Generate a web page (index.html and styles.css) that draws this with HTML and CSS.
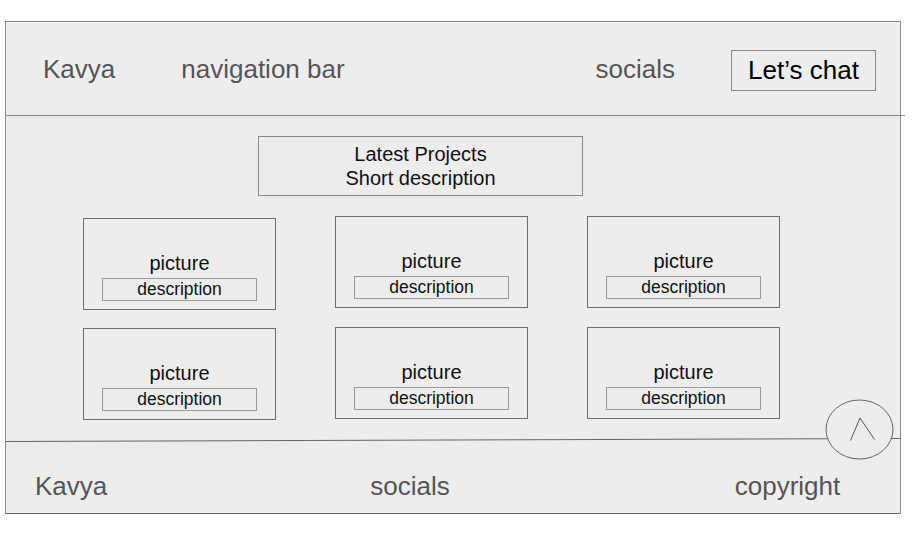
FILE: index.html
```html
<!DOCTYPE html>
<html lang="en">
<head>
<meta charset="utf-8">
<title>Kavya – wireframe</title>
<link rel="stylesheet" href="styles.css">
</head>
<body>
<div class="frame">
  <header class="header">
    <span class="label brand">Kavya</span>
    <span class="label nav">navigation bar</span>
    <span class="label socials">socials</span>
    <button class="chat-btn" type="button">Let’s chat</button>
  </header>
  <div class="header-rule"></div>

  <main class="main">
    <section class="intro">
      <div>Latest Projects</div>
      <div>Short description</div>
    </section>
    <div class="grid">
      <div class="card card--low"><div class="pic">picture</div><div class="desc">description</div></div>
      <div class="card"><div class="pic">picture</div><div class="desc">description</div></div>
      <div class="card"><div class="pic">picture</div><div class="desc">description</div></div>
      <div class="card card--low1"><div class="pic">picture</div><div class="desc">description</div></div>
      <div class="card"><div class="pic">picture</div><div class="desc">description</div></div>
      <div class="card"><div class="pic">picture</div><div class="desc">description</div></div>
    </div>
  </main>

  <svg class="footer-rule" viewBox="0 0 894 4" preserveAspectRatio="none" aria-hidden="true">
    <line x1="0" y1="3.5" x2="894" y2="0.5" stroke="#666" stroke-width="1"/>
  </svg>

  <footer class="footer">
    <span class="label f-brand">Kavya</span>
    <span class="label f-socials">socials</span>
    <span class="label f-copy">copyright</span>
  </footer>

  <button class="to-top" type="button" aria-label="Back to top">
    <svg width="69" height="61" viewBox="0 0 69 61">
      <ellipse cx="34.5" cy="30.5" rx="33.5" ry="29.5" fill="#ededed" stroke="#666" stroke-width="1"/>
      <path d="M25.5 41.5 L35 19 L49.5 40.5" fill="none" stroke="#555" stroke-width="1"/>
    </svg>
  </button>
</div>
</body>
</html>
```
FILE: styles.css
```css
* { box-sizing: border-box; }

body {
  margin: 0;
  background: #ffffff;
  font-family: "Liberation Sans", Arial, sans-serif;
}

.frame {
  position: relative;
  margin: 21px 0 0 5px;
  width: 896px;
  height: 493px;
  border: 1px solid #8c8c8c;
  border-bottom-color: #666;
  background: #ededed;
  display: flex;
  flex-direction: column;
}

.label {
  font-size: 26px;
  line-height: 30px;
  color: #555555;
  white-space: nowrap;
}

/* header */
.header {
  height: 93px;
  display: flex;
  align-items: center;
  padding-left: 37px;
}
.nav { margin-left: 66px; }
.socials { margin-left: 251px; }

.chat-btn {
  margin: 3px 0 0 56px;
  height: 41px;
  padding: 0 16px;
  border: 1px solid #8c8c8c;
  background: #ededed;
  font-family: inherit;
  font-size: 26px;
  line-height: 39px;
  color: #000;
  white-space: nowrap;
}

.header-rule {
  height: 1px;
  margin-right: -5px;
  background: #888;
}

/* main */
.main {
  height: 322px;
  padding-top: 20px;
}

.intro {
  margin-left: 252px;
  width: 325px;
  height: 60px;
  padding: 5px 0;
  border: 1px solid #888;
  text-align: center;
  font-size: 20px;
  line-height: 24px;
  color: #111;
}

.grid {
  margin: 20px 0 0 77px;
  display: grid;
  grid-template-columns: repeat(3, 193px);
  grid-auto-rows: 92px;
  column-gap: 59px;
  row-gap: 19px;
  align-items: start;
}

.card {
  height: 92px;
  border: 1px solid #6e6e6e;
  padding-top: 33px;
  display: flex;
  flex-direction: column;
  align-items: center;
}
.card--low { margin-top: 2px; }
.card--low1 { margin-top: 1px; }

.pic {
  font-size: 20px;
  line-height: 23px;
  color: #111;
}

.desc {
  margin-top: 3px;
  width: 155px;
  height: 23px;
  border: 1px solid #9a9a9a;
  text-align: center;
  font-size: 17.5px;
  line-height: 21px;
  color: #111;
}

/* footer */
.footer-rule {
  display: block;
  width: 100%;
  height: 4px;
}

.footer {
  height: 71px;
  display: flex;
  align-items: flex-start;
  padding: 29px 0 0 29px;
}
.f-socials { margin-left: 263px; }
.f-copy { margin-left: 285px; }

/* back-to-top overlay */
.to-top {
  position: absolute;
  left: 819px;
  top: 377px;
  width: 69px;
  height: 61px;
  padding: 0;
  border: 0;
  background: none;
}
.to-top svg { display: block; }
```
